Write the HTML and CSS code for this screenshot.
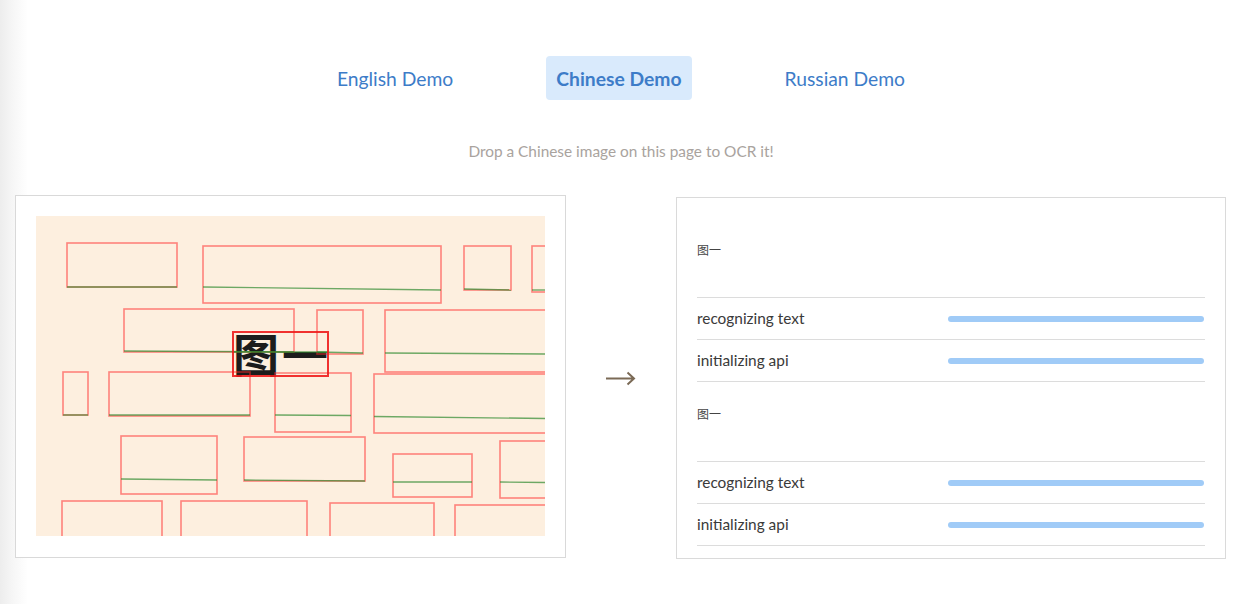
FILE: index.html
```html
<!DOCTYPE html>
<html lang="en">
<head>
<meta charset="utf-8">
<title>OCR Demo</title>
<link rel="stylesheet" href="styles.css">
</head>
<body>
<div class="page">
  <nav class="tabs">
    <a class="tab">English Demo</a>
    <a class="tab active">Chinese Demo</a>
    <a class="tab">Russian Demo</a>
  </nav>
  <p class="hint">Drop a Chinese image on this page to OCR it!</p>
  <div class="workspace">
    <div class="panel image-panel">
      <svg class="ocr-canvas" width="509" height="320" viewBox="0 0 509 320" xmlns="http://www.w3.org/2000/svg">
        <rect x="0" y="0" width="510" height="320" fill="#fdefdf"/>
        <text class="glyph" x="197" y="156">图</text>
        <text class="glyph" x="246" y="156">一</text>
        <g class="boxes" fill="none" stroke="#ff2a2a" stroke-opacity="0.55" stroke-width="1.6">
          <rect x="31" y="27" width="110" height="44"/>
          <rect x="167" y="30" width="238" height="57"/>
          <rect x="88" y="93" width="170" height="43"/>
          <rect x="281" y="94" width="46" height="44"/>
          <rect x="349" y="94" width="175" height="62"/>
          <rect x="428" y="30" width="47" height="44"/>
          <rect x="496" y="30" width="30" height="46"/>
          <rect x="27" y="156" width="25" height="43"/>
          <rect x="73" y="156" width="141" height="44"/>
          <rect x="239" y="157" width="76" height="59"/>
          <rect x="338" y="158" width="180" height="59"/>
          <rect x="85" y="220" width="96" height="58"/>
          <rect x="208" y="221" width="121" height="44"/>
          <rect x="357" y="238" width="79" height="43"/>
          <rect x="464" y="225" width="60" height="57"/>
          <rect x="26" y="285" width="100" height="50"/>
          <rect x="145" y="285" width="126" height="50"/>
          <rect x="294" y="287" width="104" height="50"/>
          <rect x="419" y="289" width="100" height="50"/>
        </g>
        <g class="baselines" stroke="#2f8a2f" stroke-opacity="0.7" stroke-width="1.4">
          <line x1="31" y1="71" x2="141" y2="71"/>
          <line x1="167" y1="71" x2="405" y2="74"/>
          <line x1="88" y1="135" x2="258" y2="136"/>
          <line x1="196" y1="136" x2="292" y2="136"/>
          <line x1="281" y1="136" x2="327" y2="137"/>
          <line x1="349" y1="137" x2="510" y2="138"/>
          <line x1="428" y1="73" x2="475" y2="74"/>
          <line x1="496" y1="74" x2="510" y2="74"/>
          <line x1="27" y1="199" x2="52" y2="199"/>
          <line x1="73" y1="199" x2="214" y2="199"/>
          <line x1="239" y1="199" x2="315" y2="199.5"/>
          <line x1="338" y1="200.5" x2="510" y2="202.5"/>
          <line x1="85" y1="263" x2="181" y2="264"/>
          <line x1="208" y1="264" x2="329" y2="265"/>
          <line x1="357" y1="266" x2="436" y2="266"/>
          <line x1="464" y1="266" x2="510" y2="266.5"/>
        </g>
        <rect x="197" y="116" width="95" height="44" fill="none" stroke="#ee1c1c" stroke-opacity="0.9" stroke-width="2"/>
      </svg>
    </div>
    <div class="arrow">
      <svg width="32" height="16" viewBox="0 0 32 16" xmlns="http://www.w3.org/2000/svg">
        <path d="M1 8.5 H29 M22.5 2.5 L29 8.5 L22.5 14.5" fill="none" stroke="#7b6a56" stroke-width="2"/>
      </svg>
    </div>
    <div class="panel log-panel">
      <div class="result">图一</div>
      <div class="status"><span>recognizing text</span><div class="bar"></div></div>
      <div class="status"><span>initializing api</span><div class="bar"></div></div>
      <div class="result">图一</div>
      <div class="status"><span>recognizing text</span><div class="bar"></div></div>
      <div class="status"><span>initializing api</span><div class="bar"></div></div>
    </div>
  </div>
</div>
</body>
</html>
```
FILE: styles.css
```css
html {
  background: #fff linear-gradient(to right, #ededed 0, #f7f7f7 14px, #fff 28px);
}

body {
  margin: 0;
  font-family: Lato, "Noto Sans CJK SC", "Liberation Sans", sans-serif;
}

.page {
  padding-top: 56px;
}

.tabs {
  display: flex;
  justify-content: center;
  gap: 83px;
  padding-left: 8px;
}

.tab {
  display: block;
  height: 44px;
  line-height: 45px;
  padding: 0 10px;
  font-size: 19.3px;
  color: #3d7cc8;
  border-radius: 4px;
  cursor: pointer;
}

.tab.active {
  font-weight: 700;
  background: #d9eafc;
}

.hint {
  margin: 42px 0 0;
  padding-left: 8px;
  text-align: center;
  font-size: 15.4px;
  line-height: 18px;
  color: #a9a39e;
}

.workspace {
  display: flex;
  align-items: flex-start;
  margin-top: 35px;
  padding-left: 15px;
}

.panel {
  box-sizing: border-box;
  background: #fff;
}

.image-panel {
  width: 551px;
  border: 1px solid #d9d9d9;
  padding: 20px 20px 21px;
}

.ocr-canvas {
  display: block;
}

.glyph {
  font-family: "Noto Sans CJK SC", sans-serif;
  font-weight: 700;
  font-size: 46px;
  fill: #1c1c1c;
}

.arrow {
  width: 110px;
  height: 363px;
  padding-top: 2px;
  box-sizing: border-box;
  display: flex;
  align-items: center;
  justify-content: center;
}

.log-panel {
  width: 550px;
  height: 362px;
  margin-top: 2px;
  border: 1px solid #dadada;
  padding: 20px;
  overflow: hidden;
}

.result {
  box-sizing: border-box;
  height: 80px;
  padding-top: 25px;
  font-size: 12px;
  line-height: 16px;
  color: #444;
  border-bottom: 1px solid #dcdcdc;
}

.status {
  box-sizing: border-box;
  height: 42px;
  display: flex;
  align-items: center;
  justify-content: space-between;
  font-size: 15.4px;
  color: #3a3a3a;
  border-bottom: 1px solid #dcdcdc;
}

.status span {
  margin-top: -1px;
}

.bar {
  width: 256px;
  height: 6px;
  margin-right: 1px;
  border-radius: 3px;
  background: #a0cbf7;
}
```
